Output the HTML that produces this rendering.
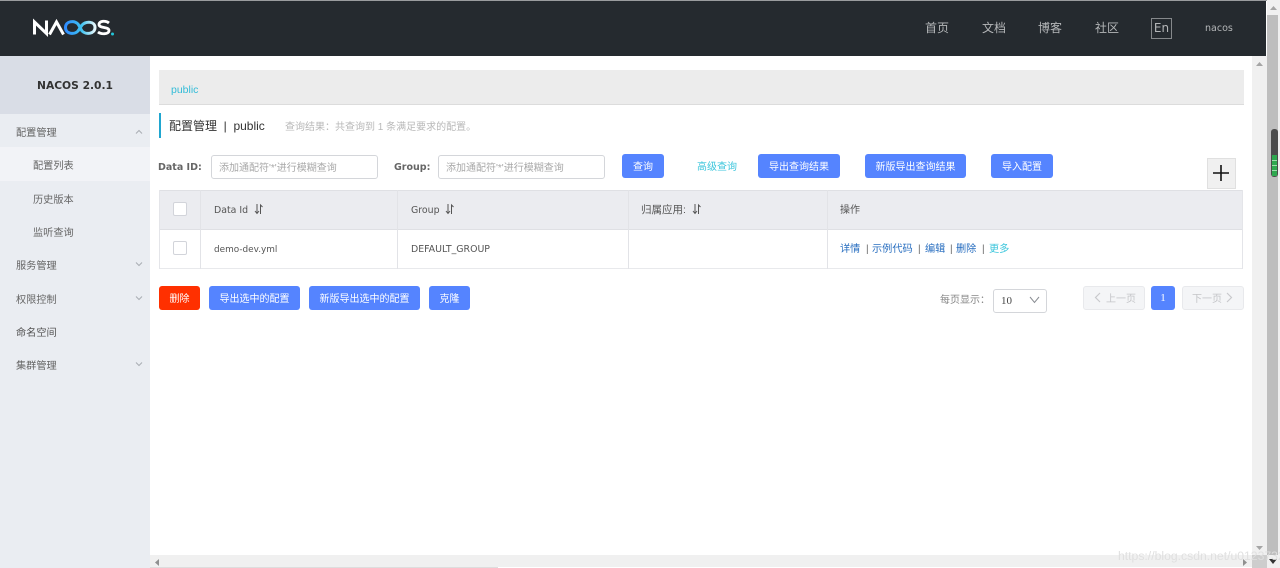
<!DOCTYPE html>
<html><head><meta charset="utf-8">
<style>
html,body{margin:0;padding:0;width:1280px;height:568px;overflow:hidden;background:#fff}
body{position:relative;font-family:"Liberation Sans","Noto Sans CJK SC",sans-serif;font-size:10px;color:#555}
.a{position:absolute;white-space:nowrap}
.t{position:absolute;white-space:nowrap;line-height:16px}
.b{position:absolute;background:#5584ff;color:#fff;border-radius:3px;height:24px;line-height:27px;text-align:center;font-size:10px;white-space:nowrap}
.inp{position:absolute;height:22px;line-height:25px;border:1px solid #d4d6da;border-radius:3px;background:#fff;color:#a8a8a8;font-size:10px;padding-left:7px;white-space:nowrap;box-sizing:content-box}
.cb{position:absolute;width:12px;height:12px;border:1px solid #d2d4da;border-radius:2px;background:#fff}
.m{position:absolute;color:#666;font-size:10.200px;line-height:16px;white-space:nowrap}
.dj{font-family:"DejaVu Sans","Noto Sans CJK SC",sans-serif}
.nav{position:absolute;top:20px;color:#b4b6b8;font-size:12px;line-height:17px;white-space:nowrap}
svg{position:absolute;overflow:visible}
</style></head><body>
<!-- top -->
<div class="a" style="left:0;top:0;width:1280px;height:1px;background:#9a9c9e"></div>
<div class="a" style="left:0;top:1px;width:1266px;height:55px;background:#252a2f"></div>
<svg style="left:32px;top:19px" width="84" height="18" viewBox="0 0 84 18" fill="none">
<defs><linearGradient id="g" x1="0" x2="1" y1="0" y2="0"><stop offset="0" stop-color="#2f8cff"/><stop offset=".55" stop-color="#3fc3f0"/><stop offset="1" stop-color="#e8f8fc"/></linearGradient></defs>
<path d="M2.500 15.500V3L14.500 14.500V1.500" stroke="#fff" stroke-width="3"/>
<path d="M17.500 15.500L24.500 3L31.500 15.500" stroke="#fff" stroke-width="3"/>
<path d="M46 5C42 1 33.500 2 33.500 8.500C33.500 15 42 16 46 12L50 6C54 2 63 2 63 8.500C63 15 54 16 50 12Z" stroke="url(#g)" stroke-width="3"/>
<path d="M77 4C74 1.500 67 1.500 67 5.500C67 9.500 77 7.500 77 11.500C77 15.500 69 15.500 66 13" stroke="#fff" stroke-width="2.800"/>
<circle cx="80.500" cy="15" r="1.500" fill="#23c4d8"/>
</svg>
<div class="nav" style="left:925px">首页</div>
<div class="nav" style="left:982px">文档</div>
<div class="nav" style="left:1038px">博客</div>
<div class="nav" style="left:1095px">社区</div>
<div class="a dj" style="left:1151px;top:18px;width:19px;height:19px;border:1px solid #85888b;color:#b4b6b8;font-size:12px;line-height:18px;text-align:center">En</div>
<div class="a dj" style="left:1205px;top:21px;color:#b4b6b8;font-size:9.500px;line-height:15px">nacos</div>

<!-- sidebar -->
<div class="a" style="left:0;top:56px;width:150px;height:512px;background:#eaedf2"></div>
<div class="a" style="left:0;top:56px;width:150px;height:58px;background:#d9dde6"></div>
<div class="a dj" style="left:0;top:78px;width:150px;text-align:center;font-weight:bold;font-size:10.700px;line-height:16px;color:#333">NACOS 2.0.1</div>
<div class="a" style="left:0;top:147px;width:150px;height:34px;background:#f2f3f7"></div>
<div class="m" style="left:16px;top:126px">配置管理</div>
<div class="m" style="left:33px;top:159px">配置列表</div>
<div class="m" style="left:33px;top:193px">历史版本</div>
<div class="m" style="left:33px;top:226px">监听查询</div>
<div class="m" style="left:16px;top:259px">服务管理</div>
<div class="m" style="left:16px;top:293px">权限控制</div>
<div class="m" style="left:16px;top:326px;color:#555">命名空间</div>
<div class="m" style="left:16px;top:359px">集群管理</div>
<svg style="left:135px;top:129px" width="8" height="6" fill="none"><path d="M1 4.500L4 1.500L7 4.500" stroke="#a9adb3"/></svg>
<svg style="left:135px;top:261px" width="8" height="6" fill="none"><path d="M1 1.500L4 4.500L7 1.500" stroke="#a9adb3"/></svg>
<svg style="left:135px;top:295px" width="8" height="6" fill="none"><path d="M1 1.500L4 4.500L7 1.500" stroke="#a9adb3"/></svg>
<svg style="left:135px;top:361px" width="8" height="6" fill="none"><path d="M1 1.500L4 4.500L7 1.500" stroke="#a9adb3"/></svg>

<!-- breadcrumb -->
<div class="a" style="left:159px;top:70px;width:1085px;height:34px;background:#ececec;border-bottom:1px solid #dcdcdc"></div>
<div class="t" style="left:171px;top:82px;color:#33bcd8;font-size:10.500px">public</div>
<div class="a" style="left:159px;top:113px;width:2px;height:25px;background:#20a6d0"></div>
<div class="t" style="left:169px;top:118px;color:#333;font-size:12px">配置管理 &nbsp;|&nbsp; public</div>
<div class="t" style="left:285px;top:120px;color:#b8b8b8;font-size:10px">查询结果：共查询到 1 条满足要求的配置。</div>

<!-- search -->
<div class="t dj" style="left:158px;top:160px;font-weight:bold;font-size:9.500px;color:#666">Data ID:</div>
<div class="inp" style="left:211px;top:155px;width:158px">添加通配符'*'进行模糊查询</div>
<div class="t dj" style="left:394px;top:160px;font-weight:bold;font-size:9.500px;color:#666">Group:</div>
<div class="inp" style="left:438px;top:155px;width:158px">添加通配符'*'进行模糊查询</div>
<div class="b" style="left:622px;top:154px;width:42px">查询</div>
<div class="t" style="left:697px;top:160px;color:#3cc6dc;font-size:10px">高级查询</div>
<div class="b" style="left:758px;top:154px;width:82px">导出查询结果</div>
<div class="b" style="left:865px;top:154px;width:101px">新版导出查询结果</div>
<div class="b" style="left:991px;top:154px;width:62px">导入配置</div>
<div class="a" style="left:1207px;top:158px;width:27px;height:29px;background:#f0f0f0;border:1px solid #e0e0e0"></div>
<svg style="left:1213px;top:165px" width="17" height="17"><path d="M0 8H16M8 0V16" stroke="#111" stroke-width="1.600"/></svg>

<!-- table -->
<div class="a" style="left:159px;top:190px;width:1084px;height:38px;background:#ebecf0;border-top:1px solid #dfe0e4;border-bottom:1px solid #dfe0e4"></div>
<div class="a" style="left:159px;top:230px;width:1084px;height:38px;border-bottom:1px solid #e8e9ec"></div>
<div class="a" style="left:159px;top:190px;width:1px;height:79px;background:#e4e5e9"></div>
<div class="a" style="left:200px;top:190px;width:1px;height:79px;background:#e2e3e7"></div>
<div class="a" style="left:397px;top:190px;width:1px;height:79px;background:#e2e3e7"></div>
<div class="a" style="left:628px;top:190px;width:1px;height:79px;background:#e2e3e7"></div>
<div class="a" style="left:827px;top:190px;width:1px;height:79px;background:#e2e3e7"></div>
<div class="a" style="left:1242px;top:190px;width:1px;height:79px;background:#e4e5e9"></div>
<div class="cb" style="left:173px;top:202px"></div>
<div class="cb" style="left:173px;top:241px"></div>
<div class="t dj" style="left:214px;top:203px;font-size:9.400px;color:#555">Data Id</div>
<div class="t dj" style="left:411px;top:203px;font-size:9.400px;color:#555">Group</div>
<div class="t" style="left:641px;top:202px;color:#555;font-size:10.500px">归属应用:</div>
<div class="t" style="left:840px;top:203px;color:#555;font-size:10px">操作</div>
<svg style="left:254px;top:204px" width="9" height="11" fill="none" stroke="#555"><path d="M3 0V9M1 7L3 9.500L5 7M6.500 10V1L8.500 3"/></svg>
<svg style="left:445px;top:204px" width="9" height="11" fill="none" stroke="#555"><path d="M3 0V9M1 7L3 9.500L5 7M6.500 10V1L8.500 3"/></svg>
<svg style="left:692px;top:204px" width="9" height="11" fill="none" stroke="#555"><path d="M3 0V9M1 7L3 9.500L5 7M6.500 10V1L8.500 3"/></svg>
<div class="t dj" style="left:214px;top:242px;font-size:8.900px;color:#555">demo-dev.yml</div>
<div class="t dj" style="left:411px;top:242px;font-size:9.400px;color:#555">DEFAULT_GROUP</div>
<div class="t" style="left:840px;top:242px;font-size:10.200px;color:#2a6fc0">详情</div>
<div class="t" style="left:866px;top:242px;font-size:10px;color:#666">|</div>
<div class="t" style="left:872px;top:242px;font-size:10.200px;color:#2a6fc0">示例代码</div>
<div class="t" style="left:918px;top:242px;font-size:10px;color:#666">|</div>
<div class="t" style="left:925px;top:242px;font-size:10.200px;color:#2a6fc0">编辑</div>
<div class="t" style="left:950px;top:242px;font-size:10px;color:#666">|</div>
<div class="t" style="left:956px;top:242px;font-size:10.200px;color:#2a6fc0">删除</div>
<div class="t" style="left:982px;top:242px;font-size:10px;color:#666">|</div>
<div class="t" style="left:989px;top:242px;font-size:10.200px;color:#3cc6dc">更多</div>

<!-- bottom actions -->
<div class="b" style="left:159px;top:286px;width:41px;background:#ff3000">删除</div>
<div class="b" style="left:209px;top:286px;width:91px">导出选中的配置</div>
<div class="b" style="left:309px;top:286px;width:111px">新版导出选中的配置</div>
<div class="b" style="left:429px;top:286px;width:41px">克隆</div>
<div class="t" style="left:940px;top:293px;color:#888;font-size:10px">每页显示：</div>
<div class="a" style="left:993px;top:289px;width:52px;height:22px;border:1px solid #d4d6da;border-radius:3px;background:#fff"></div>
<div class="t" style="left:1001px;top:293px;font-family:'Liberation Serif',serif;font-size:11px;color:#444">10</div>
<svg style="left:1029px;top:296px" width="11" height="8" fill="none"><path d="M1 1L5.500 6.500L10 1" stroke="#8a8d93"/></svg>
<div class="a" style="left:1083px;top:286px;width:60px;height:22px;background:#f4f5f7;border:1px solid #e8e9ec;border-radius:3px"></div>
<svg style="left:1094px;top:292px" width="7" height="11" fill="none"><path d="M6 1L1.500 5.500L6 10" stroke="#c8c9cc" stroke-width="1.200"/></svg>
<div class="t" style="left:1106px;top:292px;color:#c4c5c8;font-size:10px">上一页</div>
<div class="b" style="left:1151px;top:286px;width:24px;font-family:'Liberation Serif',serif;font-size:11px;line-height:25px">1</div>
<div class="a" style="left:1182px;top:286px;width:60px;height:22px;background:#f4f5f7;border:1px solid #e8e9ec;border-radius:3px"></div>
<div class="t" style="left:1192px;top:292px;color:#c4c5c8;font-size:10px">下一页</div>
<svg style="left:1226px;top:292px" width="7" height="11" fill="none"><path d="M1 1L5.500 5.500L1 10" stroke="#c8c9cc" stroke-width="1.200"/></svg>

<!-- scrollbars -->
<div class="a" style="left:1252px;top:56px;width:15px;height:512px;background:#f0f0f0"></div>
<div class="a" style="left:150px;top:555px;width:1102px;height:12px;background:#f0f0f0"></div>
<div class="a" style="left:150px;top:567px;width:348px;height:1px;background:#ddd"></div>
<div class="a" style="left:1252px;top:555px;width:15px;height:13px;background:#cdcdcd"></div>
<div class="a" style="left:1267px;top:0;width:13px;height:568px;background:#f0f0f0"></div>
<div class="a" style="left:1267px;top:15px;width:11px;height:540px;background:#bebebe"></div>
<div class="a" style="left:1271px;top:129px;width:7px;height:48px;background:#4c4c4c;border-radius:3px"></div>
<div class="a" style="left:1272px;top:155px;width:5px;height:21px;background:#2fa84f"></div>
<div class="a" style="left:1272px;top:160px;width:5px;height:1px;background:#9fdcae"></div>
<div class="a" style="left:1272px;top:165px;width:5px;height:1px;background:#9fdcae"></div>
<div class="a" style="left:1272px;top:170px;width:5px;height:1px;background:#9fdcae"></div>
<svg style="left:1270px;top:6px" width="7" height="5"><path d="M0 4L3.500 0L7 4Z" fill="#a5a5a5"/></svg>
<svg style="left:1256px;top:62px" width="7" height="4"><path d="M0 4L3.500 0L7 4Z" fill="#a5a5a5"/></svg>
<svg style="left:1256px;top:546px" width="7" height="4"><path d="M0 0L3.500 4L7 0Z" fill="#a5a5a5"/></svg>
<svg style="left:1269px;top:559px" width="8" height="5"><path d="M0 0L4 5L8 0Z" fill="#333"/></svg>
<svg style="left:155px;top:559px" width="4" height="7"><path d="M4 0L0 3.500L4 7Z" fill="#909090"/></svg>
<svg style="left:1243px;top:559px" width="4" height="7"><path d="M0 0L4 3.500L0 7Z" fill="#909090"/></svg>

<!-- watermark -->
<div class="a" style="left:1118px;top:548px;color:rgba(222,222,222,.95);font-size:12.200px;line-height:16px">https://blog.csdn.net/u012373281</div>
</body></html>
